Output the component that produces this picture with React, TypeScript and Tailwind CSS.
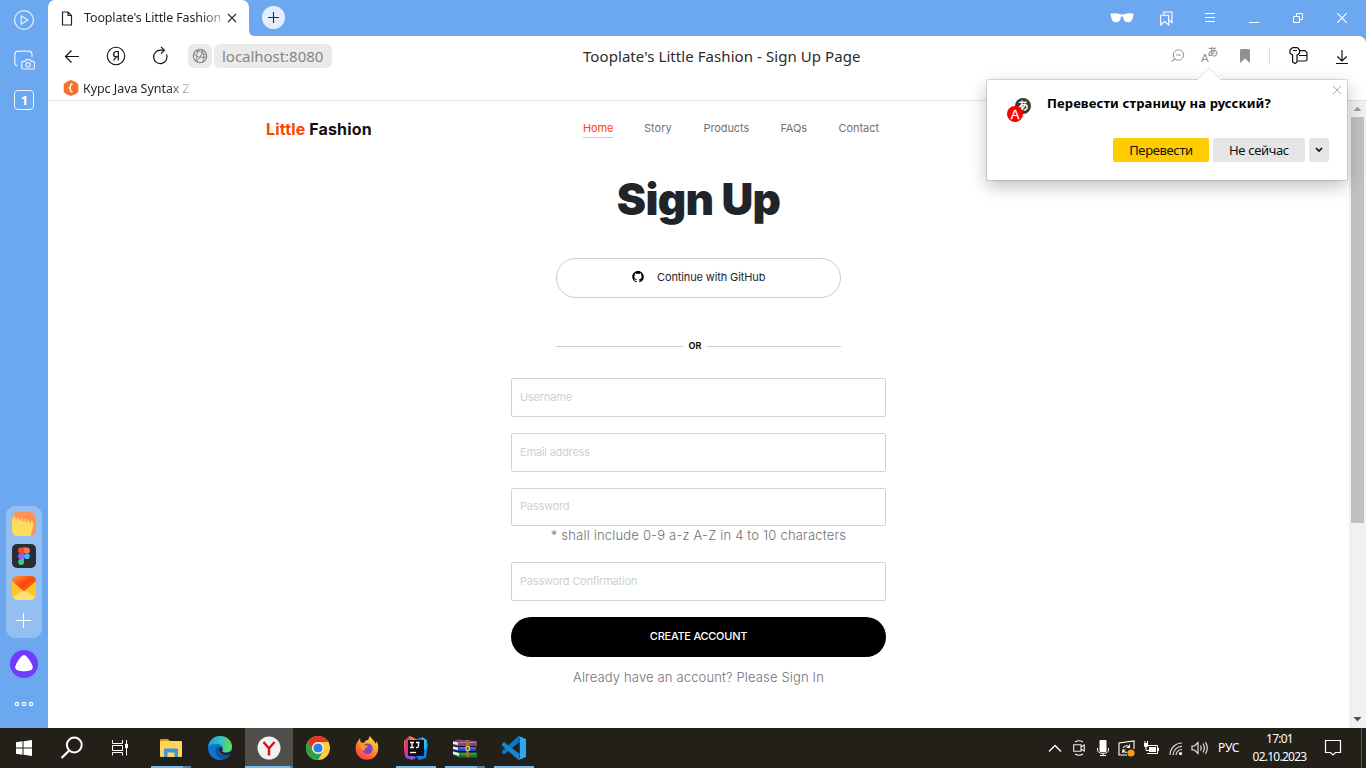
import type { ReactNode } from 'react';
import { BsGithub } from 'react-icons/bs';

function Svg({ w, h, className = '', children }: { w: number; h: number; className?: string; children: ReactNode }) {
  return (
    <svg width={w} height={h} viewBox={`0 0 ${w} ${h}`} fill="none" className={`block shrink-0 ${className}`}>
      {children}
    </svg>
  );
}

function Sidebar() {
  return (
    <aside className="flex w-12 shrink-0 flex-col items-center bg-[#6ca8ef]">
      <Svg w={22} h={22} className="mt-[9px]">
        <circle cx="11" cy="11" r="9.4" stroke="#e8f2fd" strokeWidth="1.2" />
        <path d="M8.2 6.8 L14.8 11 L8.2 15.2 Z" stroke="#e8f2fd" strokeWidth="1.2" strokeLinejoin="round" />
      </Svg>
      <Svg w={22} h={22} className="mt-[18px]">
        <path d="M4.5 17 C2.5 16.5 1.8 15.5 1.8 13.5 V6 C1.8 3.5 3 2.2 5.5 2.2 H15.5 C18 2.2 19 3.5 19 6 V8" stroke="#e8f2fd" strokeWidth="1.2" />
        <path d="M9.7 12.3 H12 L13.2 10.6 H17 L18.200 12.3 H20.600 Q21.400 12.3 21.400 13.2 V19.2 Q21.400 20 20.600 20 H9.7 Q8.8 20 8.8 19.2 V13.2 Q8.8 12.3 9.7 12.3 Z" stroke="#e8f2fd" strokeWidth="1.2" />
        <circle cx="15.1" cy="15.8" r="2.2" stroke="#e8f2fd" strokeWidth="1.2" />
      </Svg>
      <div className="mt-[19px] flex h-5 w-5 items-center justify-center rounded-[4px] border border-[#eef5fe] pl-px font-['Noto_Sans',sans-serif] text-[13px] font-bold leading-none text-white">1</div>
      <div className="mt-auto flex h-[132px] w-9 flex-col items-center rounded-[9px] bg-[#93bff3] pt-[6px]">
        <Svg w={24} h={24}>
          <rect width="24" height="24" rx="6" fill="#fe9352" />
          <path d="M0 7 L1 6 Q2.500 8.500 4 6.500 Q5.500 9.500 7.500 7.300 Q9 10.300 11 8.200 Q12.500 11.300 14.500 9.200 Q16 12.300 18 10 Q19.500 12.500 22 11 L18.500 24 H6 Q0 24 0 18 Z" fill="#fedb5c" />
          <path d="M2.500 7 V4.500 M6 8 V5.500 M9.500 9 V6.500 M13 9.800 V7.500 M16.500 10.500 V8.500 M20 11 V9" stroke="#ffe26b" strokeWidth="1.300" strokeLinecap="round" />
        </Svg>
        <Svg w={24} h={24} className="mt-2">
          <rect width="24" height="24" rx="5" fill="#2b2d33" />
          <path d="M12 3.5 H9 A2.9 2.9 0 0 0 9 9.3 H12 Z" fill="#f24e1e" />
          <path d="M12 3.5 H15 A2.9 2.9 0 0 1 15 9.3 H12 Z" fill="#ff7262" />
          <path d="M12 9.3 H9 A2.9 2.9 0 0 0 9 15.1 H12 Z" fill="#a259ff" />
          <circle cx="14.9" cy="12.2" r="2.9" fill="#3ab6f7" />
          <path d="M12 15.1 H9 A2.9 2.9 0 1 0 12 18 Z" fill="#3ccb7d" />
        </Svg>
        <Svg w={24} h={24} className="mt-2">
          <defs>
            <linearGradient id="mailFlap" x1="0" y1="0" x2="1" y2="1">
              <stop offset="0" stopColor="#ff9a3c" />
              <stop offset=".5" stopColor="#f8450f" />
              <stop offset="1" stopColor="#ff7a2c" />
            </linearGradient>
          </defs>
          <rect width="24" height="24" rx="6" fill="#ffc42d" />
          <path d="M1 21 L12 14 L23 21 Q21.500 24 18 24 H6 Q2.500 24 1 21" fill="#ffdf75" />
          <path d="M0 5 Q0 0 6 0 H18 Q24 0 24 5 L12 15.500 Z" fill="url(#mailFlap)" />
        </Svg>
        <Svg w={16} h={15} className="mt-[13px]">
          <path d="M7.500 0 V15 M0 7.500 H15" stroke="#fff" strokeWidth="1" />
        </Svg>
      </div>
      <Svg w={28} h={28} className="mt-3">
        <circle cx="14" cy="14" r="14" fill="#6f3bfd" />
        <path d="M14 5 C17 5 22.800 14.500 22.800 17.500 C22.800 20.500 18.500 21.200 14 21.200 C9.500 21.200 5.200 20.500 5.200 17.500 C5.200 14.500 11 5 14 5 Z" fill="#fff" />
      </Svg>
      <Svg w={20} h={6} className="mt-[23px] mb-[21px]">
        <circle cx="3" cy="3" r="1.700" stroke="#fff" strokeWidth="1.200" />
        <circle cx="10" cy="3" r="1.700" stroke="#fff" strokeWidth="1.200" />
        <circle cx="17" cy="3" r="1.700" stroke="#fff" strokeWidth="1.200" />
      </Svg>
    </aside>
  );
}

function Cell({ children }: { children: ReactNode }) {
  return <div className="flex h-9 w-11 items-center justify-center">{children}</div>;
}

function TitleBar() {
  return (
    <header className="flex h-9 shrink-0 bg-[#6ca8ef]">
      <div className="flex h-9 w-[201px] shrink-0 items-center rounded-t-[7px] bg-white pl-[13px]">
        <Svg w={12} h={15}>
          <path d="M1.500 1 H7 L10.500 4.500 V14 H1.500 Z M7 1 V4.500 H10.500" stroke="#1b2836" strokeWidth="1.200" />
        </Svg>
        <div className="ml-[11px] w-[136px] overflow-hidden whitespace-nowrap bg-gradient-to-r from-[#222] from-85% to-[#aaa] bg-clip-text font-['Noto_Sans',sans-serif] text-[12.500px] tracking-[-0.130px] text-transparent">
          Tooplate's Little Fashion
        </div>
        <Svg w={10} h={10} className="ml-[7px]">
          <path d="M1 1 L9 9 M9 1 L1 9" stroke="#222f3d" strokeWidth="1.100" />
        </Svg>
      </div>
      <Svg w={6} h={36}>
        <path d="M0 30 Q0 36 6 36 H0 Z" fill="#fff" />
      </Svg>
      <div className="ml-[7px] mt-[6px] flex h-[23px] w-[23px] items-center justify-center rounded-full bg-[#e2eefc]">
        <Svg w={11} h={11}>
          <path d="M5.500 0 V11 M0 5.500 H11" stroke="#222f3d" strokeWidth="1.100" />
        </Svg>
      </div>
      <div className="ml-auto mr-[2px] flex">
        <Cell>
          <Svg w={24} h={10}>
            <path d="M0 .700 Q5 -.300 9.500 .900 Q12 1.900 14.500 .900 Q19 -.300 24 .700 L23 3 C22.500 7.500 21 9.300 18 9.300 C15 9.300 13.700 7.500 13 3.800 Q12 2.800 11 3.800 C10.300 7.500 9 9.300 6 9.300 C3 9.300 1.500 7.500 1 3 Z" fill="#fff" />
          </Svg>
        </Cell>
        <Cell>
          <Svg w={13} h={15}>
            <path d="M.700 4.300 H8.700 V14 L4.700 10.500 L.700 14 Z" stroke="#fff" strokeWidth="1.100" />
            <path d="M3.700 4 V1 H12 V11.500 L9 9" stroke="#fff" strokeWidth="1.100" />
          </Svg>
        </Cell>
        <Cell>
          <Svg w={10} h={10}>
            <path d="M0 .500 H10 M0 4.500 H10 M0 8.500 H10" stroke="#fff" />
          </Svg>
        </Cell>
        <Cell>
          <Svg w={10} h={10}>
            <path d="M0 9.500 H10" stroke="#fff" />
          </Svg>
        </Cell>
        <Cell>
          <Svg w={10} h={10}>
            <path d="M.500 3.500 H6.500 V9.500 H.500 Z M3.500 3.500 V.500 H9.500 V6.500 H6.500" stroke="#fff" />
          </Svg>
        </Cell>
        <Cell>
          <Svg w={10} h={10}>
            <path d="M0 0 L10 10 M10 0 L0 10" stroke="#fff" strokeWidth="1.100" />
          </Svg>
        </Cell>
      </div>
    </header>
  );
}

function Toolbar() {
  return (
    <div className="flex h-10 shrink-0 items-center bg-white">
      <div className="flex w-[140px] shrink-0">
        <div className="flex w-12 justify-center">
          <Svg w={16} h={20}>
            <path d="M15 10.500 H1.500 M7.500 4.500 L1.500 10.500 L7.500 16.500" stroke="#111" strokeWidth="1.200" />
          </Svg>
        </div>
        <div className="ml-[-1px] flex w-[42px] justify-center">
          <Svg w={20} h={20}>
            <circle cx="10" cy="10" r="8.700" stroke="#111" strokeWidth="1.100" />
            <path d="M12.300 14.500 V5.500 H10.700 C8.700 5.500 7.700 6.700 7.700 8.200 C7.700 10 8.800 10.800 10.500 10.800 H12.300 M10.300 10.800 L7.500 14.500" stroke="#111" strokeWidth="1.200" />
          </Svg>
        </div>
        <div className="ml-px flex w-[44px] justify-center">
          <Svg w={18} h={20}>
            <path d="M15.600 8.500 A6.700 6.700 0 1 1 9.500 4.200 H13 M10 .800 L13.400 4.200 L10 7.600" stroke="#111" strokeWidth="1.200" />
          </Svg>
        </div>
      </div>
      <div className="flex h-6 w-6 shrink-0 items-center justify-center rounded-md bg-[#ebebeb]">
        <Svg w={16} h={16}>
          <circle cx="8" cy="8" r="6.700" stroke="#888" strokeWidth="1.200" />
          <path d="M1.500 5.500 Q5 10.500 14.500 9 M4 13.500 Q10 9 10.500 1.800 M6.500 1.500 Q3.500 6 5 13 M10 2 Q13 7 11 14 M4.500 3 Q10 3 14 7" stroke="#888" strokeWidth="1" />
        </Svg>
      </div>
      <div className="ml-[2px] flex h-6 w-[118px] shrink-0 items-center rounded-md bg-[#ebebeb] pl-2 font-['Noto_Sans',sans-serif] text-[15px] tracking-[-0.030px] text-[#858585]">
        localhost:8080
      </div>
      <div className="ml-[251px] w-[290px] whitespace-nowrap font-['Noto_Sans',sans-serif] text-[15px] tracking-[0.070px] text-[#2b2b2b]">
        Tooplate's Little Fashion - Sign Up Page
      </div>
      <div className="ml-[298px] flex shrink-0 items-center">
        <Svg w={14} h={14}>
          <circle cx="7.500" cy="6" r="5.200" stroke="#919191" />
          <path d="M5.200 6 H9.800 M3.800 9.700 L.800 12.700" stroke="#919191" strokeWidth="1.200" />
        </Svg>
        <div className="ml-4 flex w-[18px] font-['Liberation_Sans','Noto_Sans_CJK_JP',sans-serif] leading-none text-[#919191]">
          <span className="mt-[5px] text-[11.500px]">A</span>
          <span className="-ml-[1.500px] -mt-px text-[11px] font-medium">あ</span>
        </div>
        <Svg w={10} h={14} className="ml-[21px]">
          <path d="M0 1.500 Q0 0 1.500 0 H8.500 Q10 0 10 1.500 V14 L5 9.500 L0 14 Z" fill="#919191" />
        </Svg>
        <div className="ml-[19px] h-4 w-px bg-[#ddd]" />
        <Svg w={20} h={20} className="ml-[19px]">
          <path d="M3.500 1.700 H8.500 L10.500 4 V7.200 L8 9 V16 L6 17.600 L3.600 16 V9 L1 7.200 V4 Z M4 4.500 H8" stroke="#111" strokeWidth="1.200" strokeLinejoin="round" />
          <path d="M10.500 4.700 H16 L18 6.700 V13.300 Q18 15 16.300 15 H8.300 M10 9.500 H18" stroke="#111" strokeWidth="1.200" />
        </Svg>
        <Svg w={12} h={16} className="ml-[27px] mt-px">
          <path d="M6 1 V12 M1.300 7.500 L6 12 L10.700 7.500 M0 14.500 H12" stroke="#111" strokeWidth="1.200" />
        </Svg>
      </div>
    </div>
  );
}

function Bookmarks() {
  return (
    <div className="flex h-[25px] shrink-0 items-center border-b border-[#e2e2e2] bg-white pl-[15px]">
      <Svg w={16} h={16}>
        <path d="M8 0 Q15 2.500 15.300 4.500 V11.500 Q15 13.500 8 16 Q1 13.500 .700 11.500 V4.500 Q1 2.500 8 0 Z" fill="#f6732f" />
        <path d="M9.500 4 Q7.500 4 7.500 5.500 Q7.800 7.500 6.300 8 Q7.800 8.500 7.500 10.500 Q7.500 12 9.500 12" stroke="#fff" strokeWidth="1.300" />
      </Svg>
      <div className="ml-1 mt-[2px] w-[107px] overflow-hidden whitespace-nowrap bg-gradient-to-r from-[#222] from-78% to-[#ddd] bg-clip-text font-['Noto_Sans',sans-serif] text-[12.500px] leading-5 tracking-[-0.050px] text-transparent">
        Курс Java Syntax Z
      </div>
    </div>
  );
}

function Field({ label, className }: { label: string; className: string }) {
  return (
    <input
      placeholder={label}
      className={`block w-[375px] shrink-0 rounded-[2px] border border-[#ced4da] bg-white px-2 text-[11px] tracking-[-0.200px] outline-none placeholder:text-[#d0d0d0] placeholder:opacity-100 ${className}`}
    />
  );
}

function Page() {
  return (
    <main className="flex-1 bg-white font-['Inter',sans-serif]">
      <nav className="flex h-[56px] items-center pl-[218px]">
        <div className="w-[317px] whitespace-nowrap text-[16px] font-bold tracking-[0.150px] text-[#111]">
          <span className="text-[#ff4400]">Little</span> Fashion
        </div>
        <div className="flex text-[11px] leading-[17px] text-[#717275]">
          <span className="w-[30px] whitespace-nowrap border-b border-[#ccc] tracking-[-0.100px] text-[#ff4400]">Home</span>
          <span className="ml-[31px] w-[28px]">Story</span>
          <span className="ml-[31.500px] w-[46px] tracking-[-0.100px]">Products</span>
          <span className="ml-[31px] w-[27px] tracking-[-0.150px]">FAQs</span>
          <span className="ml-[31px] tracking-[-0.050px]">Contact</span>
        </div>
      </nav>
      <section className="flex flex-col items-center text-[#212529]">
        <h1 className="mt-[15px] h-[56px] whitespace-nowrap text-[44px] font-black leading-[54px] tracking-[-0.700px]">Sign Up</h1>
        <button className="mt-[30px] flex h-10 w-[285px] items-center rounded-full border border-[#ccc] pb-[2px] pl-[75px] text-[11px] tracking-[-0.120px] text-[#212529]">
          <BsGithub className="h-[11.500px] w-3 shrink-0 text-black" />
          <span className="ml-[13px] whitespace-nowrap">Continue with GitHub</span>
        </button>
        <div className="mt-[38px] flex h-5 w-[285px] items-center">
          <span className="h-px w-[127px] bg-[#ccc]" />
          <span className="w-6 text-center text-[9px] font-bold leading-5 text-[#111]">OR</span>
          <span className="h-px w-[134px] bg-[#ccc]" />
        </div>
        <Field label="Username" className="mt-[22px] h-[39px] pb-px" />
        <Field label="Email address" className="mt-4 h-[39px] pb-px" />
        <Field label="Password" className="mt-4 h-[38px] pb-[2px]" />
        <p className="h-5 whitespace-nowrap text-[13px] font-light leading-[19px] tracking-[0.190px] text-[#717275]">* shall include 0-9 a-z A-Z in 4 to 10 characters</p>
        <Field label="Password Confirmation" className="mt-4 h-[39px] pb-px" />
        <button className="mt-4 h-10 w-[375px] rounded-full bg-black pb-[2px] text-[11px] font-medium tracking-[-0.270px] text-white">CREATE ACCOUNT</button>
        <p className="mt-[10px] h-5 whitespace-nowrap text-[13px] font-light leading-5 tracking-[0.150px] text-[#717275]">Already have an account? Please Sign In</p>
      </section>
    </main>
  );
}

function Scrollbar() {
  return (
    <div className="flex w-[17px] shrink-0 flex-col items-center bg-[#f1f1f1]">
      <Svg w={17} h={16}>
        <path d="M4.500 10 L8.500 5.500 L12.500 10 Z" fill="#a0a0a0" />
      </Svg>
      <div className="h-[406px] w-[13px] bg-[#c1c1c1]" />
      <Svg w={17} h={17} className="mt-auto">
        <path d="M4.500 6 L8.500 10.500 L12.500 6 Z" fill="#505050" />
      </Svg>
    </div>
  );
}

function TranslatePopup() {
  return (
    <div className="absolute left-[987px] top-[80px] h-[100px] w-[360px] rounded-[2px] bg-white font-['Noto_Sans',sans-serif] shadow-[0_0_0_1px_rgba(0,0,0,0.13),0_6px_18px_rgba(0,0,0,0.26)]">
      <Svg w={26} h={14} className="absolute -top-[13px] left-[209px]">
        <path d="M0 14 L13 1 L26 14 Z" fill="#fff" />
        <path d="M1 13 L13 1 L25 13" stroke="#dedede" />
      </Svg>
      <Svg w={10} h={10} className="absolute right-[5px] top-[5px]">
        <path d="M1 1 L9 9 M9 1 L1 9" stroke="#aaa" />
      </Svg>
      <div className="flex pl-5 pt-[14px]">
        <div className="relative mt-1 h-6 w-6 font-['Liberation_Sans','Noto_Sans_CJK_JP',sans-serif] text-white">
          <span className="absolute right-0 top-0 flex h-[16px] w-[16px] items-center justify-center rounded-full bg-[#3b3b3b] text-[11px] font-bold leading-none">あ</span>
          <span className="absolute bottom-0 left-0 flex h-[16px] w-[16px] items-center justify-center rounded-full bg-[#ff0000] text-[13px] leading-none [-webkit-text-stroke:0.3px_white]">A</span>
        </div>
        <div className="ml-4 whitespace-nowrap text-[13px] font-bold leading-[18px] tracking-[0.130px] text-black">Перевести страницу на русский?</div>
      </div>
      <div className="mt-4 flex gap-1 pl-[126px] text-[13px] tracking-[-0.350px] text-[#111]">
        <button className="h-6 w-24 whitespace-nowrap rounded-[2px] bg-[#ffcc00] pt-px">Перевести</button>
        <button className="h-6 w-[92px] whitespace-nowrap rounded-[2px] bg-[#e5e5e5] pt-px">Не сейчас</button>
        <button className="flex h-6 w-5 items-center justify-center rounded-[2px] bg-[#e5e5e5]">
          <Svg w={8} h={6}>
            <path d="M1 1 L4 4 L7 1" stroke="#111" strokeWidth="1.700" />
          </Svg>
        </button>
      </div>
    </div>
  );
}

function TaskButton({ open, active, split, children }: { open?: boolean; active?: boolean; split?: boolean; children: ReactNode }) {
  return (
    <div className={`flex h-10 flex-col items-center ${active ? 'ml-px w-12 bg-[#504e4a]' : 'w-[49px]'}`}>
      <div className="flex h-[38px] items-center justify-center pt-[2px]">{children}</div>
      {open && (
        <div className={`flex h-[2px] ${active ? 'w-full' : 'w-10'}`}>
          <span className="flex-1 bg-[#76b9ed]" />
          {split && <span className={`bg-[#54819f] ${active ? 'w-[3px]' : 'w-2'}`} />}
        </div>
      )}
    </div>
  );
}

function Taskbar() {
  return (
    <footer className="flex h-10 shrink-0 bg-[#231f19] text-white">
      <div className="flex w-[146px] items-center">
        <div className="flex w-12 justify-center">
          <Svg w={16} h={16}>
            <path d="M0 2.300 L6.500 1.300 V7.500 H0 Z M7.500 1.200 L16 0 V7.500 H7.500 Z M0 8.500 H6.500 V14.700 L0 13.700 Z M7.500 8.500 H16 V16 L7.500 14.800 Z" fill="#fff" />
          </Svg>
        </div>
        <div className="flex w-12 justify-center">
          <Svg w={24} h={24}>
            <circle cx="14.300" cy="9" r="7.400" stroke="#fff" strokeWidth="2" />
            <path d="M9 14.700 L1.500 22" stroke="#fff" strokeWidth="2.300" />
          </Svg>
        </div>
        <div className="flex w-12 justify-center">
          <Svg w={16} h={16}>
            <path d="M.500 0 V3.500 H10.500 V0 M.500 15.500 V12.500 H10.500 V15.500 M.500 5.500 H10.500 V10.500 H.500 Z M14.500 0 V15.500" stroke="#fff" />
            <rect x="13" y="4" width="3" height="4" fill="#fff" />
          </Svg>
        </div>
      </div>
      <TaskButton open split>
        <Svg w={22} h={20}>
          <path d="M0 1.500 Q0 1 1 1 H8 L10 3 V8 H0 Z" fill="#dd9a0a" />
          <rect y="3" width="22" height="16" rx="1" fill="#ffd35c" />
          <path d="M4 19 V11.500 Q4 10.500 5 10.500 H17 Q18 10.500 18 11.500 V19 H14.500 V14.500 H7.500 V19 Z" fill="#3a96dd" />
        </Svg>
      </TaskButton>
      <TaskButton>
        <Svg w={24} h={24}>
          <defs>
            <linearGradient id="edgeTop" x1="0" y1=".3" x2="1" y2=".4">
              <stop stopColor="#2499df" />
              <stop offset=".5" stopColor="#30c3c4" />
              <stop offset="1" stopColor="#66dc52" />
            </linearGradient>
          </defs>
          <circle cx="12" cy="12" r="12" fill="#0f75ce" />
          <path d="M.200 11 C1 4 6 0 12 0 C19 0 24 5 24 10.500 C24 14.500 21 16.500 17.500 16.500 C15 16.500 13.800 15.500 14.500 14.500 C17 11 13 8 9.500 8 C5.500 7.800 1.500 9 .200 11 Z" fill="url(#edgeTop)" />
          <path d="M8 11.500 C5.500 18 11 24 17 23 C20 22 22 20 23 17.500 C19 20 12 19.500 10.500 15 C10 13 10.500 11.500 12 10.500 Q9.500 9.500 8 11.500 Z" fill="#12549e" />
          <path d="M10.700 13.500 Q10.500 11.500 13 11 Q15.300 12.500 14.300 14.600 C13.500 16 15.500 17 18.500 16.700 Q22 16.500 24 14.500 L23 17.500 Q20 19.500 17 19 Q12 18 10.700 13.500 Z" fill="#231f19" />
        </Svg>
      </TaskButton>
      <TaskButton open active split>
        <Svg w={24} h={24}>
          <circle cx="12" cy="12" r="11.500" fill="#f1f1f1" />
          <path d="M6.500 6 L12 12.500 L17.500 6 M12 12 V19.500" stroke="#dc1111" strokeWidth="2.400" />
        </Svg>
      </TaskButton>
      <TaskButton>
        <Svg w={24} h={24}>
          <circle cx="12" cy="12" r="12" fill="#ffce3f" />
          <path d="M1.600 6 A12 12 0 0 1 22.400 6 H12 A6 6 0 0 0 6.800 15 Z" fill="#e2362a" />
          <path d="M1.600 6 A12 12 0 0 0 12 24 L17.200 15 A6 6 0 0 1 6.800 15 Z" fill="#2aa24c" />
          <circle cx="12" cy="12" r="5.700" fill="#fff" />
          <circle cx="12" cy="12" r="4.600" fill="#2f7de9" />
        </Svg>
      </TaskButton>
      <TaskButton>
        <Svg w={24} h={24}>
          <defs>
            <linearGradient id="fox" x1=".8" y1="0" x2=".2" y2="1">
              <stop stopColor="#ffe637" />
              <stop offset=".5" stopColor="#ff8b22" />
              <stop offset="1" stopColor="#ff3055" />
            </linearGradient>
          </defs>
          <path d="M5 2 L5.500 6 L9 7 C10 4.500 12 4 13 4 L15 0 C16 3 20 5 21 8 L21.500 5 C23 8 23.500 10 23.200 13 C23 19 18 23.800 12 23.800 C5.500 23.800 .600 19 .600 12.500 C.600 8.500 2 6.500 3 5 Z" fill="url(#fox)" />
          <circle cx="12.500" cy="12.800" r="5.200" fill="#7b43d4" />
          <path d="M5 8 Q8 8 10 9.500 L13 10 Q12.500 11.500 10 12.500 Q9 13.500 10 15 Q7 14.500 6 12 Z" fill="#ff9724" />
        </Svg>
      </TaskButton>
      <TaskButton open>
        <Svg w={24} h={24}>
          <path d="M0 5 L6 0 L14 4 L10 16 L0 12 Z" fill="#fd7b34" />
          <path d="M1 5 L5 0 L7 10 L2 22 L0 16 Z" fill="#ec2c87" />
          <path d="M13 3 L18 1 L24 8 L22 22 L15 24 L10 18 Z" fill="#137ceb" />
          <path d="M18 1 L23 4 L22 14 L18 10 Z" fill="#36b9ee" />
          <path d="M1 19 L7 17 L12 22 L8 24 L2 22 Z" fill="#9150dc" />
          <rect x="4" y="4" width="16" height="16" fill="#100c13" />
          <path d="M6 6.500 H10 M8 6.500 V11.500 M6 11.500 H10 M12 6.500 H15.500 M14.500 6.500 V10.500 Q14.300 11.700 12 11.500" stroke="#fff" strokeWidth="1.300" />
          <path d="M6 16.500 H12" stroke="#fff" strokeWidth="1.300" />
        </Svg>
      </TaskButton>
      <TaskButton open split>
        <Svg w={24} h={20} className="mt-[2px]">
          <path d="M0 2 L5 .500 L24 2 V7 L5 7 L0 6 Z" fill="#8a4470" />
          <path d="M0 7 L5 8 H23 V12 H5 L0 11 Z" fill="#2347c8" />
          <path d="M0 12 L5 13.500 H24 V18.500 H6 L0 16 Z" fill="#187c26" />
          <path d="M0 2.500 L5 3.500 V6 L0 5 Z M0 7.500 L5 8.500 V11 L0 10 Z M0 12.500 L6 14 V17 L0 15 Z" fill="#eee" />
          <path d="M6 3.500 H23 M6 9 H23 M6 15 H23" stroke="#ffffff" strokeOpacity=".35" />
          <path d="M6 7.500 H23 M6 12.500 H23" stroke="#111" />
          <path d="M14.500 1 V18" stroke="#a87535" strokeWidth="2.500" />
          <rect x="12.500" y="7" width="4.500" height="5" fill="#d1b379" />
          <path d="M14.700 8 V11" stroke="#433421" />
        </Svg>
      </TaskButton>
      <TaskButton open>
        <Svg w={24} h={24}>
          <path d="M16.500 0 L0 15 V17 L2 18.500 L17.500 6 Z" fill="#0a76c4" />
          <path d="M0 8 L2 6 L17.500 18 L16.500 24 L0 9.500 Z" fill="#1689d5" />
          <path d="M16.500 0 L24 3 V21 L16.500 24 L17.800 21 V3 Z" fill="#2ca8f2" />
        </Svg>
      </TaskButton>
      <div className="ml-auto flex items-center">
        <Svg w={14} h={9}>
          <path d="M1 7.500 L7 1.500 L13 7.500" stroke="#fff" strokeWidth="1.300" />
        </Svg>
        <Svg w={12} h={16} className="ml-[11px]">
          <path d="M2 2 Q6 -.500 10 2 M2 14 Q6 16.500 10 14 M.700 4.700 H8 V11.300 H.700 Z M8 7 L11.300 5 V11 L8 9" stroke="#eee" strokeWidth="1.100" />
        </Svg>
        <Svg w={12} h={16} className="ml-3">
          <rect x="2.500" width="7" height="12" rx="1" fill="#fff" />
          <path d="M.600 8 V10 Q.600 13.300 6 13.300 Q11.400 13.300 11.400 10 V8 M6 13 V15.500 M3 15.500 H9" stroke="#fff" />
        </Svg>
        <Svg w={18} h={17} className="ml-[9px] mr-px">
          <path d="M9 15 H1 V3 L16 1 V9 M1 15 H7" stroke="#fff" strokeWidth="1.100" />
          <path d="M5 8 Q8 4 11 7 M11.500 4.500 V7.500 H8.500 M9 12 Q6 13 5 10.500 M4.700 13 V10 H7.500" stroke="#fff" strokeWidth="1.100" />
          <circle cx="13" cy="13" r="3.600" fill="#ff970c" />
        </Svg>
        <Svg w={16} h={14} className="ml-[6px]">
          <path d="M5 4.500 H14.500 V12.500 H4 M15.500 7 V10" stroke="#fff" />
          <rect x="6" y="6" width="7" height="5" fill="#fff" />
          <path d="M1 2 V5.500 Q3 7 5 5.500 V2 Z" fill="#fff" />
          <path d="M2 0 V3 M4.500 0 V3 M3 6 V9.500 H6" stroke="#fff" />
        </Svg>
        <Svg w={14} h={13} className="ml-[10px]">
          <path d="M1 13 A12 12 0 0 1 13 1 M4 13 A9 9 0 0 1 13 4.300 M7 13 A6 6 0 0 1 13 7.500" stroke="#ddd" strokeWidth="1.200" />
          <circle cx="11.500" cy="11.500" r="1.600" fill="#fff" />
        </Svg>
        <Svg w={18} h={14} className="ml-2">
          <path d="M1 5 H3.500 L7 1.500 V12.500 L3.500 9 H1 Z M9.500 4.500 Q11 7 9.500 9.500 M12 2.500 Q14.700 7 12 11.500 M14.500 1 Q18 7 14.500 13" stroke="#eee" strokeWidth="1.100" />
        </Svg>
        <span className="ml-[9px] w-[26px] font-['Noto_Sans',sans-serif] text-[12px] tracking-[-0.100px]">РУС</span>
        <div className="ml-[2px] flex w-[67px] flex-col items-center font-['Noto_Sans',sans-serif] text-[12px] leading-[18px] tracking-[-0.750px]">
          <span>17:01</span>
          <span>02.10.2023</span>
        </div>
        <Svg w={18} h={18} className="ml-[11px]">
          <path d="M1.500 1.500 H16.500 V13.500 H11.500 L9 16 L6.500 13.500 H1.500 Z" stroke="#fff" strokeWidth="1.200" />
        </Svg>
        <span className="ml-[19px] mr-1 h-10 w-px bg-[#5b5853]" />
      </div>
    </footer>
  );
}

export default function App() {
  return (
    <div className="relative flex h-[768px] w-[1366px] flex-col overflow-hidden bg-white">
      <div className="flex h-[728px] shrink-0">
        <Sidebar />
        <div className="flex w-[1318px] flex-col bg-[#6ca8ef]">
          <TitleBar />
          <div className="flex h-[692px] flex-col overflow-hidden rounded-tr-[8px] bg-white">
            <Toolbar />
            <Bookmarks />
            <div className="flex flex-1">
              <Page />
              <Scrollbar />
            </div>
          </div>
        </div>
      </div>
      <Taskbar />
      <TranslatePopup />
    </div>
  );
}
